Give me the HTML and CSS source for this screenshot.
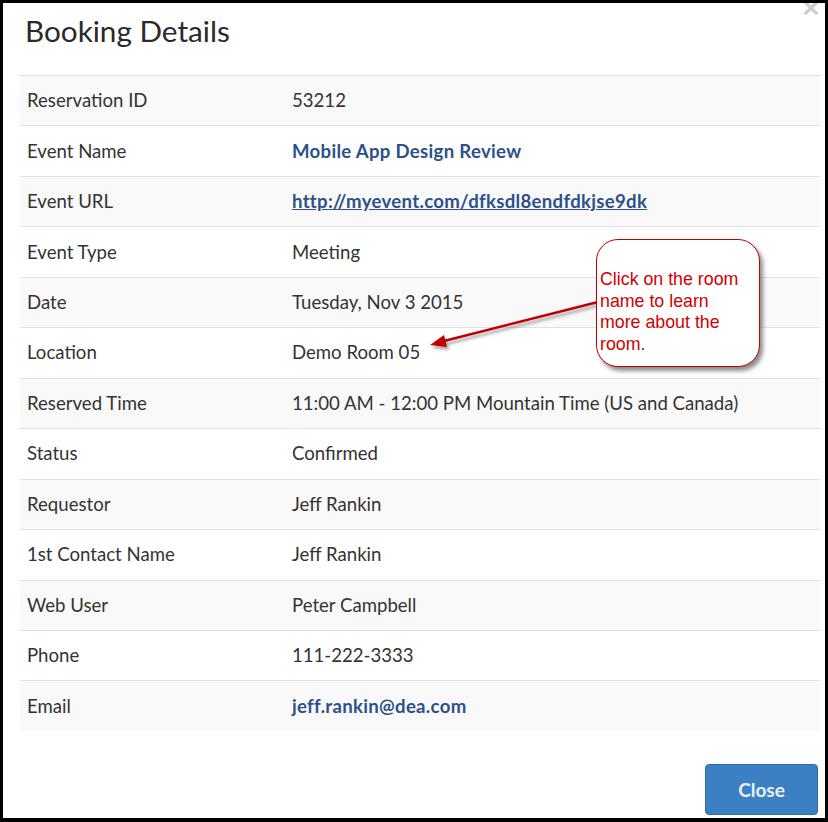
FILE: index.html
```html
<!DOCTYPE html>
<html>
<head>
<meta charset="utf-8">
<title>Booking Details</title>
<link rel="stylesheet" href="styles.css">
</head>
<body>
<div class="modal">
  <svg class="close-x" width="14" height="14" viewBox="0 0 14 14"><path d="M2 2 L12 12 M12 2 L2 12" stroke="#cfcfcf" stroke-width="3.4" stroke-linecap="square"/></svg>
  <h1 class="title">Booking Details</h1>
  <div class="table">
    <div class="row"><div class="label">Reservation ID</div><div class="value">53212</div></div>
    <div class="row"><div class="label">Event Name</div><div class="value"><a class="link">Mobile App Design Review</a></div></div>
    <div class="row"><div class="label">Event URL</div><div class="value"><a class="link underline">http://myevent.com/dfksdl8endfdkjse9dk</a></div></div>
    <div class="row"><div class="label">Event Type</div><div class="value">Meeting</div></div>
    <div class="row"><div class="label">Date</div><div class="value">Tuesday, Nov 3 2015</div></div>
    <div class="row"><div class="label">Location</div><div class="value">Demo Room 05</div></div>
    <div class="row"><div class="label">Reserved Time</div><div class="value">11:00 AM - 12:00 PM Mountain Time (US and Canada)</div></div>
    <div class="row"><div class="label">Status</div><div class="value">Confirmed</div></div>
    <div class="row"><div class="label">Requestor</div><div class="value">Jeff Rankin</div></div>
    <div class="row"><div class="label">1st Contact Name</div><div class="value">Jeff Rankin</div></div>
    <div class="row"><div class="label">Web User</div><div class="value">Peter Campbell</div></div>
    <div class="row"><div class="label">Phone</div><div class="value">111-222-3333</div></div>
    <div class="row"><div class="label">Email</div><div class="value"><a class="link">jeff.rankin@dea.com</a></div></div>
  </div>
  <div class="footer"><button class="btn">Close</button></div>

  <svg class="arrow" width="200" height="75" viewBox="0 0 200 75">
    <defs>
      <filter id="sh" x="-20%" y="-50%" width="140%" height="200%">
        <feDropShadow dx="2" dy="3" stdDeviation="1.5" flood-color="#000" flood-opacity="0.35"/>
      </filter>
    </defs>
    <g filter="url(#sh)">
      <line x1="198" y1="17" x2="44" y2="56" stroke="#c00000" stroke-width="2.5"/>
      <polygon points="30,60 44,50 47,62" fill="#c00000"/>
    </g>
  </svg>
  <div class="callout">Click on the room<br>name to learn<br>more about the<br>room.</div>
</div>
</body>
</html>
```
FILE: styles.css
```css
html, body {
  margin: 0;
  padding: 0;
}
body {
  background: #000;
  width: 828px;
  height: 822px;
  overflow: hidden;
}
.modal {
  position: relative;
  overflow: hidden;
  margin: 3px 3px 0 3px;
  width: 822px;
  height: 815px;
  background: #fff;
  box-sizing: border-box;
  padding: 0 5px 0 17px;
  font-family: Lato, "Open Sans", sans-serif;
  color: #333;
}
.close-x {
  position: absolute;
  right: 7px;
  top: -2px;
}
.title {
  margin: 0;
  height: 72px;
  box-sizing: border-box;
  padding: 10px 0 0 5px;
  font-size: 29.7px;
  font-weight: 400;
  color: #2a2a2a;
  line-height: 36px;
}
.table {
  display: flex;
  flex-direction: column;
}
.row {
  display: grid;
  grid-template-columns: 272px 1fr;
  height: 50.46px;
  box-sizing: border-box;
  border-top: 1px solid #e2e2e2;
  align-items: center;
  font-size: 18.6px;
  padding-bottom: 1px;
}
.row:nth-child(odd) {
  background: #f9f9f9;
}
.label {
  padding-left: 7px;
}
.link {
  color: #2c5189;
  font-weight: 700;
  letter-spacing: 0.3px;
  text-decoration: none;
}
.link.underline {
  text-decoration: underline;
}
.footer {
  display: flex;
  justify-content: flex-end;
  padding-top: 33px;
  padding-right: 2px;
}
.btn {
  width: 113px;
  height: 51px;
  background: #3b80c2;
  border: 1px solid #2e6da4;
  border-radius: 4px;
  color: #e8f1fa;
  font-family: Lato, sans-serif;
  font-size: 19px;
  font-weight: 700;
  padding: 0;
}
.arrow {
  position: absolute;
  left: 397px;
  top: 282px;
}
.callout {
  position: absolute;
  left: 593px;
  top: 236px;
  width: 164px;
  height: 128px;
  box-sizing: border-box;
  border: 1.5px solid #c00000;
  border-radius: 22px;
  background: #fff;
  box-shadow: 3px 4px 4px rgba(0,0,0,0.45);
  padding: 29px 2px 0 3px;
  font-family: "Liberation Sans", Arial, sans-serif;
  font-size: 17.8px;
  line-height: 21.5px;
  color: #d00000;
  white-space: nowrap;
}
```
